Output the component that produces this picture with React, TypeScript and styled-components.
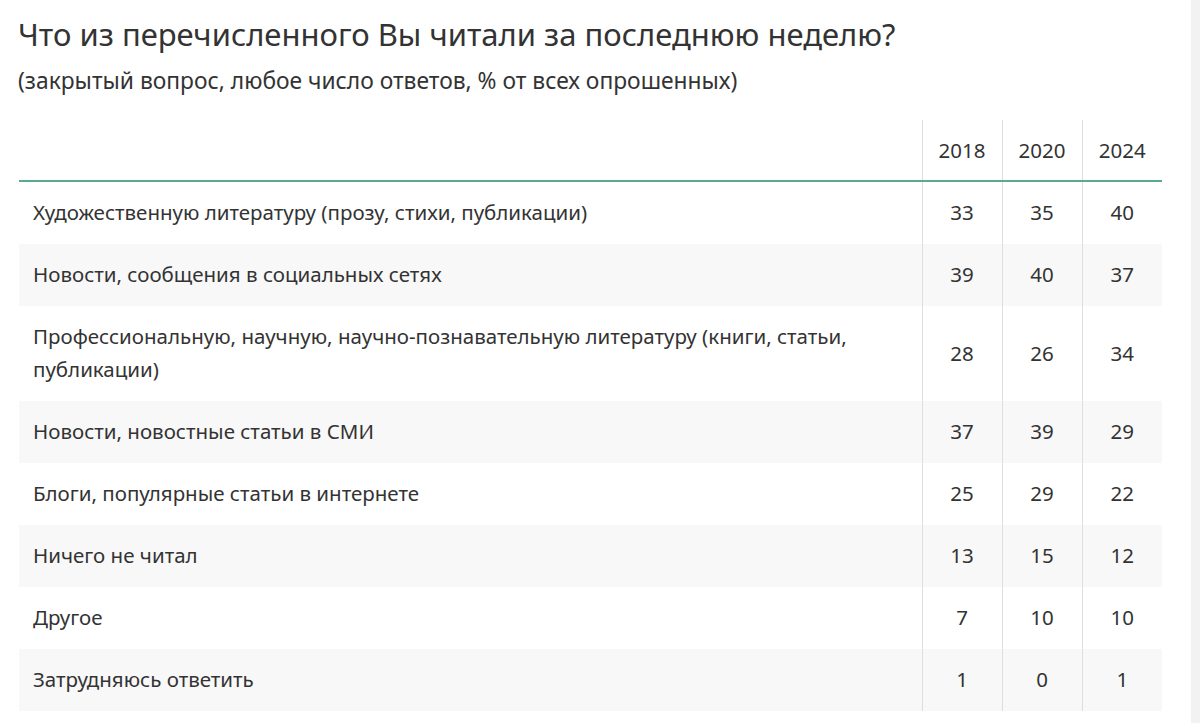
import React from 'react';
import styled, { createGlobalStyle } from 'styled-components';

const GlobalStyle = createGlobalStyle`
    html, body {
        margin: 0;
        padding: 0;
        background: #FFFFFF;
        overflow: hidden;
    }
    body {
        font-family: 'Noto Sans', 'Open Sans', sans-serif;
        color: #333333;
    }
`

const years = ['2018', '2020', '2024'];

const rows: { label: string; values: number[] }[] = [
    { label: 'Художественную литературу (прозу, стихи, публикации)', values: [33, 35, 40] },
    { label: 'Новости, сообщения в социальных сетях', values: [39, 40, 37] },
    { label: 'Профессиональную, научную, научно-познавательную литературу (книги, статьи, публикации)', values: [28, 26, 34] },
    { label: 'Новости, новостные статьи в СМИ', values: [37, 39, 29] },
    { label: 'Блоги, популярные статьи в интернете', values: [25, 29, 22] },
    { label: 'Ничего не читал', values: [13, 15, 12] },
    { label: 'Другое', values: [7, 10, 10] },
    { label: 'Затрудняюсь ответить', values: [1, 0, 1] },
];

const App: React.FC = () => {
    return (
        <>
            <GlobalStyle />
            <Page>
                <Content>
                    <Title>Что из перечисленного Вы читали за последнюю неделю?</Title>
                    <Subtitle>(закрытый вопрос, любое число ответов, % от всех опрошенных)</Subtitle>
                    <Table>
                        <colgroup>
                            <col />
                            <col style={{ width: 80 }} />
                            <col style={{ width: 80 }} />
                            <col style={{ width: 80 }} />
                        </colgroup>
                        <thead>
                            <tr>
                                <HeadCell />
                                {years.map((y) => (
                                    <HeadCell key={y} $num>{y}</HeadCell>
                                ))}
                            </tr>
                        </thead>
                        <tbody>
                            {rows.map((row, i) => (
                                <Row key={row.label} $striped={i % 2 === 1}>
                                    <LabelCell>{row.label}</LabelCell>
                                    {row.values.map((v, j) => (
                                        <NumCell key={j}>{v}</NumCell>
                                    ))}
                                </Row>
                            ))}
                        </tbody>
                    </Table>
                </Content>
                <ScrollTrack />
            </Page>
        </>
    )
};

export default App;

const Page = styled.div`
    display: flex;
    height: 723px;
    width: 100%;
`
const Content = styled.div`
    flex: 1;
    padding: 0 29px 0 19px;
`
const ScrollTrack = styled.div`
    width: 9px;
    background: #F2F2F2;
`
const Title = styled.h1`
    margin: 14px 0 0 -1px;
    font-size: 31px;
    font-weight: normal;
    line-height: 40px;
    color: #333333;
`
const Subtitle = styled.p`
    margin: 12px 0 0 -1px;
    font-size: 22.8px;
    line-height: 30px;
    color: #333333;
`
const Table = styled.table`
    width: 100%;
    margin-top: 24px;
    border-collapse: collapse;
    table-layout: fixed;
    font-size: 20.5px;
    color: #333333;
`
const HeadCell = styled.th<{ $num?: boolean }>`
    height: 60px;
    padding: 0;
    font-weight: normal;
    text-align: center;
    border-bottom: 2px solid #5AAA90;
    border-left: ${(p) => (p.$num ? '1px solid #DDDDDD' : 'none')};
`
const Row = styled.tr<{ $striped: boolean }>`
    background: ${(p) => (p.$striped ? '#F8F8F8' : '#FFFFFF')};
`
const LabelCell = styled.td`
    padding: 14px 40px 15px 14px;
    line-height: 33px;
    text-align: left;
`
const NumCell = styled.td`
    padding: 14px 0 15px;
    line-height: 33px;
    text-align: center;
    border-left: 1px solid #DDDDDD;
`
